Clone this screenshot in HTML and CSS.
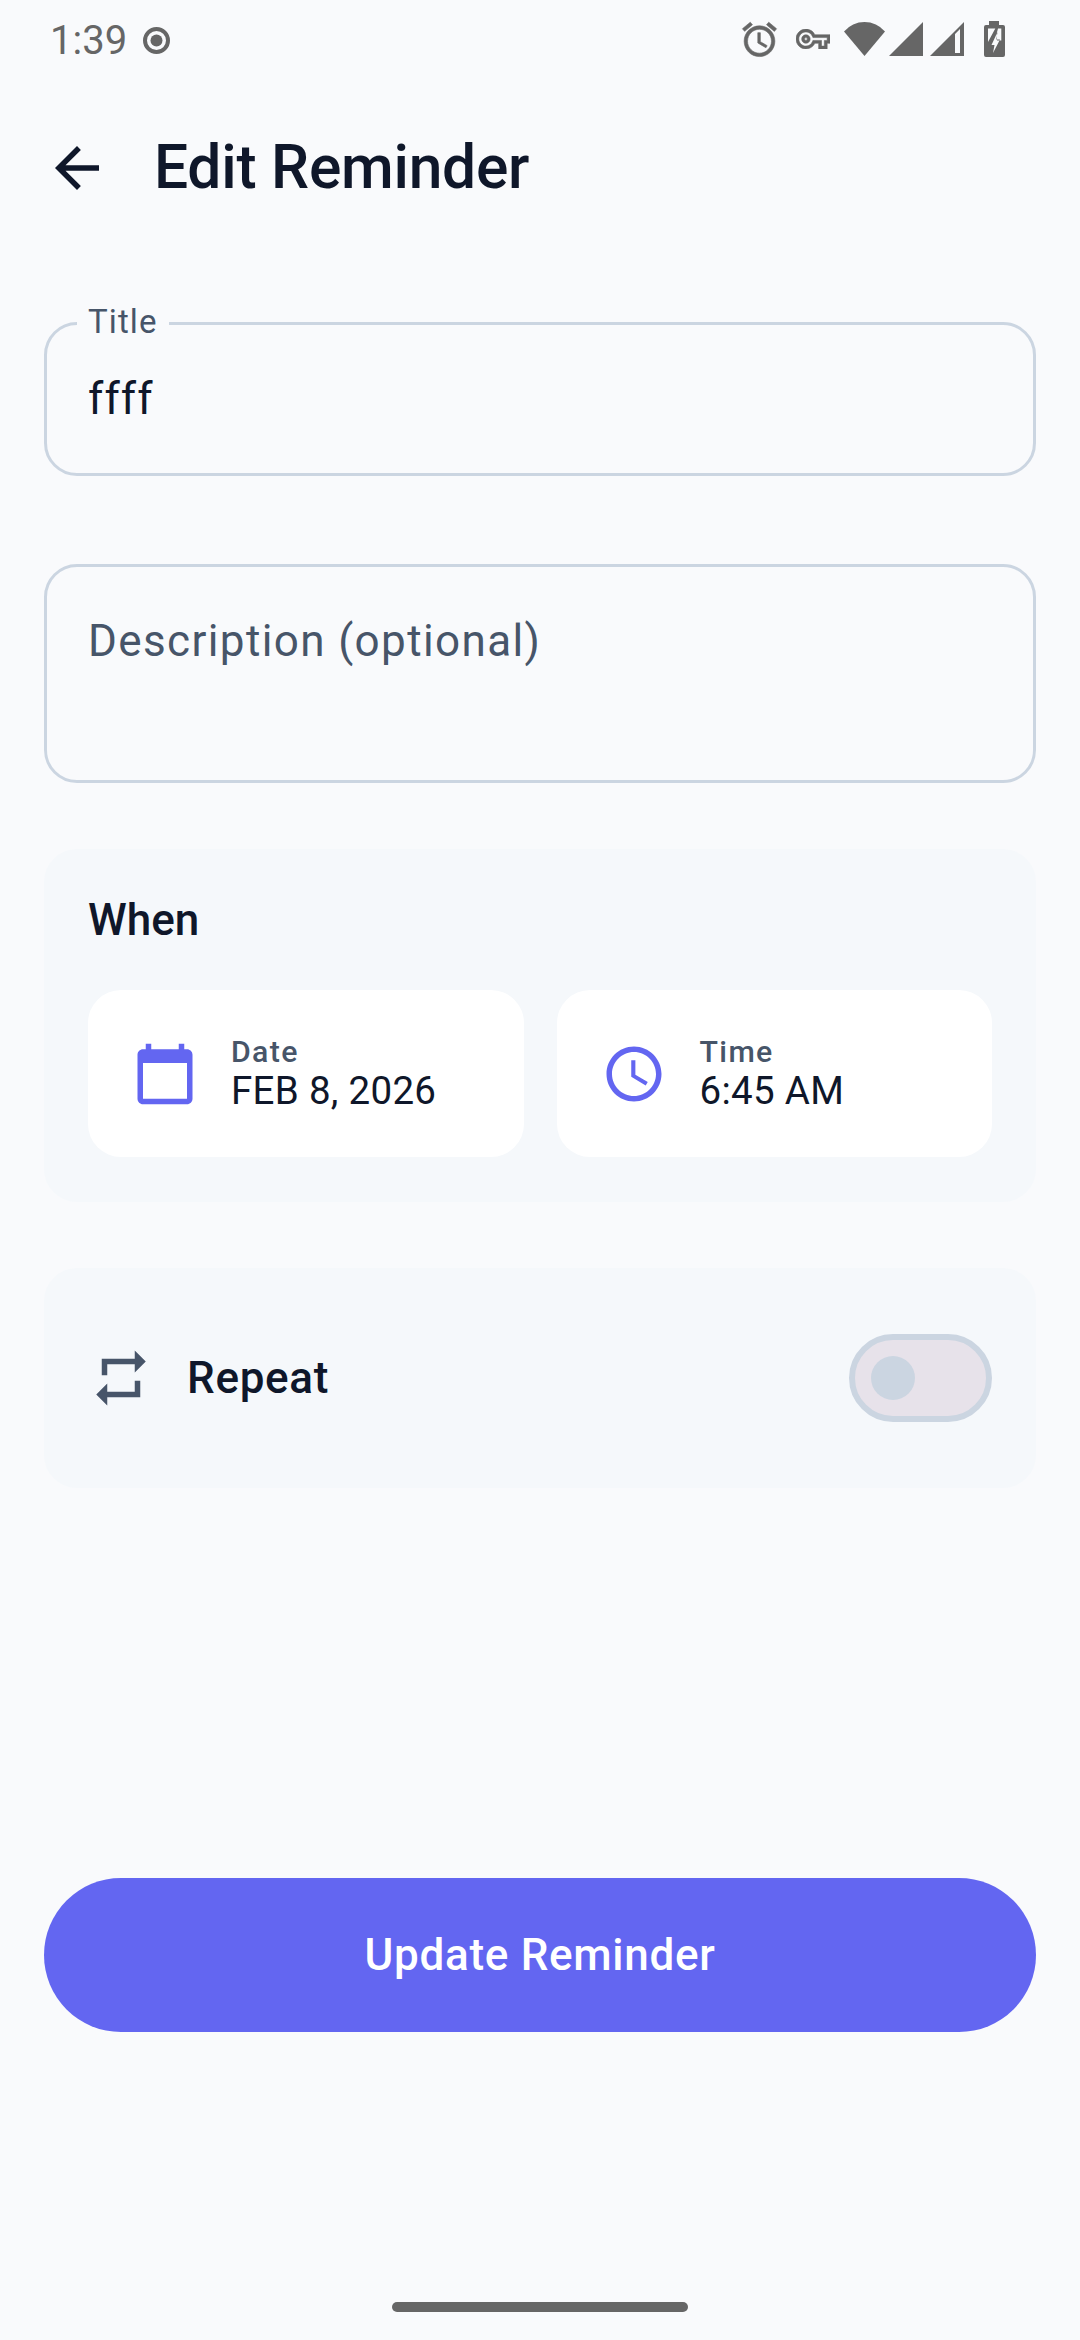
FILE: index.html
```html
<!DOCTYPE html>
<html lang="en">
<head>
<meta charset="utf-8">
<title>Edit Reminder</title>
<link rel="stylesheet" href="styles.css">
</head>
<body>
<div class="screen">
  <div class="status">
    <div class="status-left">
      <span class="clock">1:39</span>
      <svg class="rec" viewBox="0 0 27 27"><circle cx="13.5" cy="13.5" r="11.5" fill="none" stroke="#666" stroke-width="4"/><circle cx="13.5" cy="13.5" r="6" fill="#666"/></svg>
    </div>
    <div class="status-right">
      <svg class="s-alarm" viewBox="0 0 24 24"><path d="M22 5.72l-4.6-3.86-1.29 1.53 4.6 3.86L22 5.72zM7.88 3.39L6.6 1.86 2 5.71l1.29 1.53 4.59-3.85zM12.5 8H11v6l4.75 2.85.75-1.23-4-2.37V8zM12 4c-4.97 0-9 4.03-9 9s4.03 9 9 9 9-4.03 9-9-4.03-9-9-9zm0 16c-3.87 0-7-3.13-7-7s3.13-7 7-7 7 3.13 7 7-3.13 7-7 7z"/></svg>
      <svg class="s-key" viewBox="0 0 24 14"><path transform="translate(0 -5)" d="M22 19h-6v-4h-2.68c-1.14 2.42-3.6 4-6.32 4-3.86 0-7-3.14-7-7s3.14-7 7-7c2.72 0 5.17 1.58 6.32 4H24v6h-2v4zm-4-2h2v-4h2v-2H11.94l-.23-.67C11.01 8.34 9.11 7 7 7c-2.76 0-5 2.24-5 5s2.24 5 5 5c2.11 0 4.01-1.34 4.71-3.33l.23-.67H18v4zM7 15c-1.65 0-3-1.35-3-3s1.35-3 3-3 3 1.35 3 3-1.35 3-3 3zm0-4c-.55 0-1 .45-1 1s.45 1 1 1 1-.45 1-1-.45-1-1-1z"/></svg>
      <svg class="s-wifi" viewBox="0 0 41 34"><path d="M0 9.5A27 27 0 0 1 41 9.5L20.5 34Z"/></svg>
      <svg class="s-sig" viewBox="0 0 34 34"><path d="M0 34L34 0V34Z"/></svg>
      <svg class="s-sig" viewBox="0 0 34 34"><path fill-rule="evenodd" d="M0 34L34 0V34ZM25 12V31H30V7Z"/></svg>
      <svg class="s-bat" viewBox="0 0 21 36"><path fill-rule="evenodd" d="M5 0H15V4H19Q21 4 21 6V34Q21 36 19 36H2Q0 36 0 34V6Q0 4 2 4H5ZM4 7.500V21L11.300 7.500ZM14 7.500 12.800 12 13 19.500H17.300V7.500ZM13.500 11 7.500 24H10.500L9 32 16 18.500H12.300Z"/></svg>
    </div>
  </div>

  <header class="appbar">
    <svg class="back" viewBox="0 0 24 24"><path d="M20 11H7.830l5.590-5.590L12 4l-8 8 8 8 1.410-1.410L7.830 13H20v-2z"/></svg>
    <h1 class="title">Edit Reminder</h1>
  </header>

  <main class="form">
    <div class="field field-title">
      <span class="field-label">Title</span>
      <span class="field-value">ffff</span>
    </div>
    <div class="field field-desc">
      <span class="field-hint">Description (optional)</span>
    </div>

    <section class="panel when">
      <h2 class="panel-title">When</h2>
      <div class="pickers">
        <div class="picker">
          <svg class="icon accent" viewBox="0 0 24 24"><path d="M20 3h-1V1h-2v2H7V1H5v2H4c-1.100 0-2 .9-2 2v16c0 1.100.9 2 2 2h16c1.100 0 2-.9 2-2V5c0-1.100-.9-2-2-2zm0 18H4V8h16v13z"/></svg>
          <div class="picker-text">
            <span class="picker-label">Date</span>
            <span class="picker-value">FEB 8, 2026</span>
          </div>
        </div>
        <div class="picker">
          <svg class="icon accent" viewBox="0 0 24 24"><path d="M11.990 2C6.470 2 2 6.480 2 12s4.470 10 9.990 10C17.520 22 22 17.520 22 12S17.520 2 11.990 2zM12 20c-4.420 0-8-3.580-8-8s3.580-8 8-8 8 3.580 8 8-3.580 8-8 8zm.5-13H11v6l5.250 3.150.75-1.230-4.500-2.670z"/></svg>
          <div class="picker-text">
            <span class="picker-label">Time</span>
            <span class="picker-value">6:45 AM</span>
          </div>
        </div>
      </div>
    </section>

    <section class="panel repeat">
      <svg class="icon muted" viewBox="0 0 24 24"><path d="M7 7h10v3l4-4-4-4v3H5v6h2V7zm10 10H7v-3l-4 4 4 4v-3h12v-6h-2v4z"/></svg>
      <span class="repeat-label">Repeat</span>
      <div class="switch"><span class="thumb"></span></div>
    </section>

    <button class="submit" type="button">Update Reminder</button>
  </main>

  <div class="home-wrap"><div class="home"></div></div>
</div>
</body>
</html>
```

FILE: styles.css
```css
* { box-sizing: border-box; }
html, body { margin: 0; padding: 0; }
body { background: #F9FAFC; font-family: Roboto, "Noto Sans", sans-serif; color: #0F172A; }
.screen { width: 1080px; height: 2340px; display: flex; flex-direction: column; overflow: hidden; }

.status { height: 78px; padding: 0 75px 0 50px; display: flex; align-items: center; justify-content: space-between; }
.status-left { display: flex; align-items: center; gap: 16px; padding-top: 3px; }
.clock { font-size: 40px; color: #666; line-height: 1; }
.rec { width: 27px; height: 27px; display: block; }
.status-right { display: flex; align-items: center; }
.status-right svg { display: block; fill: #666; }
.s-alarm { width: 41px; height: 41px; margin-right: 16px; stroke: #666; stroke-width: .35; }
.s-key { width: 34px; height: 20px; margin-right: 14px; stroke: #666; stroke-width: .4; }
.s-wifi { width: 41px; height: 34px; margin-right: 4px; }
.s-sig { width: 34px; height: 34px; margin-right: 7px; }
.s-bat { width: 21px; height: 36px; margin-left: 13px; }

.appbar { height: 180px; padding-left: 44px; display: flex; align-items: center; gap: 44px; }
.back { width: 66px; height: 66px; fill: #0F172A; display: block; }
.title { margin: 0; font-size: 60.5px; font-weight: 500; line-height: 1; letter-spacing: -.25px; color: #0F172A; }

.form { padding: 64px 44px 0; display: flex; flex-direction: column; }

.field { position: relative; border: 3px solid #CBD5E1; border-radius: 33px; padding: 0 41px; }
.field-title { height: 154px; display: flex; align-items: center; }
.field-desc { height: 219px; margin-top: 88px; padding-top: 48px; }
.field-label { position: absolute; left: 30px; top: -18px; padding: 0 11px; background: #F9FAFC; font-size: 33px; line-height: 30px; letter-spacing: 1.1px; color: #475569; }
.field-value { font-size: 44px; line-height: 1; letter-spacing: 1.1px; color: #0F172A; }
.field-hint { display: block; font-size: 44px; line-height: 1.2; letter-spacing: 1.375px; color: #475569; }

.panel { background: #F5F8FB; border-radius: 33px; }
.when { margin-top: 66px; height: 353px; padding: 45px 44px 44px; }
.panel-title { margin: 0; font-size: 44px; font-weight: 500; line-height: 52px; color: #0F172A; }
.pickers { margin-top: 44px; display: flex; gap: 33px; }
.picker { flex: 1; height: 167px; background: #fff; border-radius: 33px; padding: 0 44px; display: flex; align-items: center; gap: 33px; }
.icon { width: 66px; height: 66px; display: block; flex: none; }
.accent { fill: #6366F1; }
.muted { fill: #475569; }
.picker-text { display: flex; flex-direction: column; }
.picker-label { font-size: 30.25px; font-weight: 500; line-height: 36px; letter-spacing: 1.375px; color: #475569; }
.picker-value { font-size: 38.5px; line-height: 46px; letter-spacing: .3px; margin-top: -2px; color: #0F172A; }

.repeat { margin-top: 66px; height: 220px; padding: 0 44px; display: flex; align-items: center; gap: 33px; }
.repeat-label { flex: 1; font-size: 44px; font-weight: 500; letter-spacing: .7px; color: #0F172A; }
.switch { width: 143px; height: 88px; border: 6px solid #CBD5E1; border-radius: 44px; background: #E7E2EA; display: flex; align-items: center; padding-left: 16px; }
.thumb { width: 44px; height: 44px; border-radius: 50%; background: #CBD5E1; }

.submit { margin-top: 390px; height: 154px; border: 0; border-radius: 77px; background: #6366F1; color: #fff; font-family: inherit; font-size: 44px; font-weight: 500; letter-spacing: .7px; }

.home-wrap { margin-top: auto; height: 38px; display: flex; justify-content: center; }
.home { width: 296px; height: 10px; border-radius: 5px; background: #666; }
```
